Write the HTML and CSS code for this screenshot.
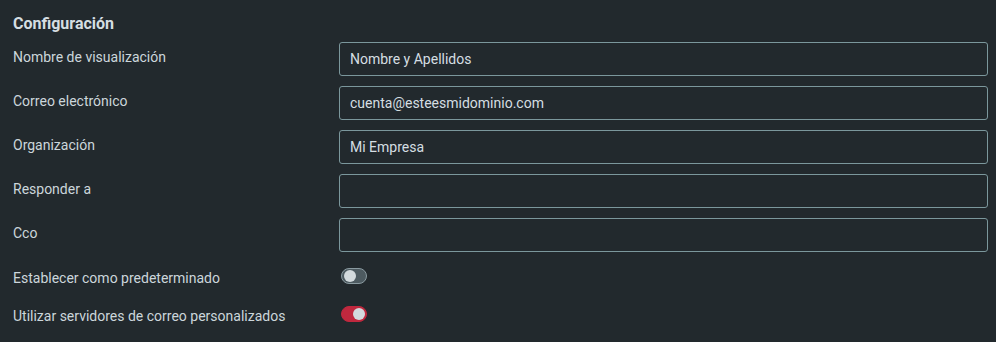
FILE: index.html
```html
<!DOCTYPE html>
<html lang="es">
    <head>
        <meta charset="UTF-8" />
        <meta name="viewport" content="width=device-width, initial-scale=1.0" />
        <title>Configuración</title>
        <link rel="stylesheet" href="styles.css">
    </head>
    <body>
        <main>
            <h1>Configuración</h1>
            <form id="identity-form">
                <div class="fields">
                    <div class="row">
                        <label for="p-name">Nombre de visualización</label>
                        <input type="text" id="p-name" value="Nombre y Apellidos" />
                    </div>
                    <div class="row">
                        <label for="p-email">Correo electrónico</label>
                        <input type="text" id="p-email" value="cuenta@esteesmidominio.com" />
                    </div>
                    <div class="row">
                        <label for="p-org">Organización</label>
                        <input type="text" id="p-org" value="Mi Empresa" />
                    </div>
                    <div class="row">
                        <label for="p-reply">Responder a</label>
                        <input type="text" id="p-reply" />
                    </div>
                    <div class="row">
                        <label for="p-bcc">Cco</label>
                        <input type="text" id="p-bcc" />
                    </div>
                </div>
                <div class="switches">
                    <div class="row switch-row">
                        <label for="o-default">Establecer como predeterminado</label>
                        <span class="switch"><input type="checkbox" id="o-default" /><span class="knob"></span></span>
                    </div>
                    <div class="row switch-row">
                        <label for="o-servers">Utilizar servidores de correo personalizados</label>
                        <span class="switch"><input type="checkbox" id="o-servers" checked /><span class="knob"></span></span>
                    </div>
                </div>
            </form>
        </main>
    </body>
</html>
```

FILE: styles.css
```css
* {
    outline: none;
    box-sizing: border-box;
}
body {
    margin: 0;
    background-color: #22292d;
    color: #ccd6db;
    font-family: Roboto, "Liberation Sans", sans-serif;
    font-size: 14px;
}
main {
    padding: 14px 8px 0 13px;
}
h1 {
    margin: 0 0 8px 0;
    font-size: 16px;
    font-weight: bold;
    color: #d5dee2;
    line-height: 20px;
}
.fields {
    display: flex;
    flex-direction: column;
    gap: 10px;
}
.row {
    display: grid;
    grid-template-columns: 326px 1fr;
    align-items: start;
}
.row label {
    padding-top: 6px;
    line-height: 18px;
}
.row input[type="text"] {
    height: 34px;
    padding: 0 10px;
    border: 1px solid #7b979c;
    border-radius: 3px;
    background-color: #22292d;
    color: #d5dee2;
    font-family: Roboto, "Liberation Sans", sans-serif;
    font-size: 14px;
}
.switches {
    padding-top: 5px;
}
.switch-row {
    align-items: center;
    height: 38px;
}
.switch-row label {
    padding-top: 3px;
}
.switch {
    position: relative;
    display: inline-block;
    width: 26px;
    height: 16px;
    margin-left: 2px;
}
.switch input {
    position: absolute;
    opacity: 0;
    margin: 0;
}
.switch .knob {
    display: block;
    width: 100%;
    height: 100%;
    border-radius: 8px;
    border: 1px solid #8a9aa0;
    background-color: #4d5a60;
}
.switch .knob::after {
    content: "";
    position: absolute;
    top: 2px;
    left: 3px;
    width: 12px;
    height: 12px;
    border-radius: 50%;
    background-color: #d3dadd;
}
.switch input:checked + .knob {
    border-color: #c0283e;
    background-color: #c0283e;
}
.switch input:checked + .knob::after {
    left: 12px;
}
```
